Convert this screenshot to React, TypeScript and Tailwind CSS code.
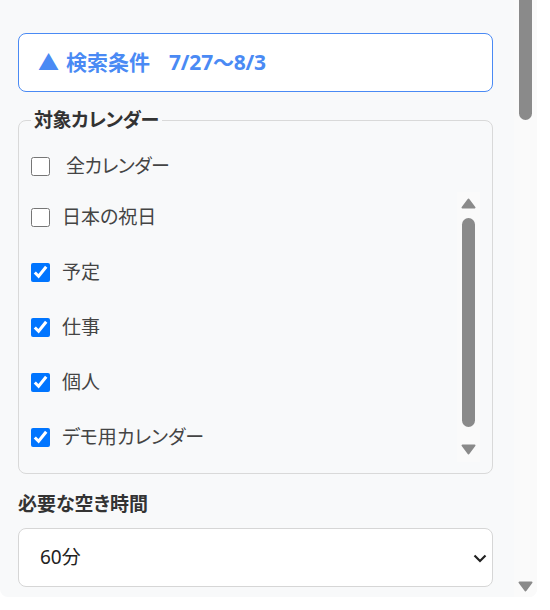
import React from 'react';

const calendars = [
  { name: '日本の祝日', checked: false },
  { name: '予定', checked: true },
  { name: '仕事', checked: true },
  { name: '個人', checked: true },
  { name: 'デモ用カレンダー', checked: true },
];

function Arrow({ up }: { up?: boolean }) {
  return (
    <svg width="15" height="11" viewBox="0 0 15 11" className="shrink-0">
      <polygon
        points={up ? '7.5,1.5 13.5,9.5 1.5,9.5' : '1.5,1.5 13.5,1.5 7.5,9.5'}
        fill="#8a8a8a"
        stroke="#8a8a8a"
        strokeWidth="2"
        strokeLinejoin="round"
      />
    </svg>
  );
}

export default function App() {
  return (
    <div className="h-[610px] w-[550px] overflow-hidden bg-white font-['Noto_Sans','Noto_Sans_CJK_JP',sans-serif] [font-feature-settings:'palt']">
      <div className="flex h-[597px] w-[537px] overflow-hidden rounded-b-lg bg-[#f8f9fa]">
        <div className="flex flex-1 flex-col pl-[18px] pr-[21px] pt-[33px]">
          <button className="flex h-[59px] w-full shrink-0 items-center rounded-lg border border-[#4a8af4] bg-white pl-[19px] text-[21px] font-bold leading-none text-[#4a8af4]">
            <span>▲</span>
            <span className="ml-[7px]">検索条件</span>
            <span className="ml-[19px] tracking-[-0.2px]">7/27〜8/3</span>
          </button>

          {/* Target calendars */}
          <fieldset className="mt-[19px] rounded-lg border border-[#d9d9d9] px-[12px] pb-[11px]">
            <legend className="px-[3px] text-[19px] font-bold leading-[18px] tracking-[-0.4px] text-[#333]">対象カレンダー</legend>
            <div className="pt-[17px]">
              <label className="flex h-[40px] items-center">
                <input type="checkbox" className="m-0 h-[19px] w-[19px] shrink-0" />
                <span className="ml-[16px] text-[19px] tracking-[-0.5px] text-[#444]">全カレンダー</span>
              </label>
            </div>
            <div className="mt-[6px] flex h-[270px]">
              <div className="flex-1 overflow-hidden">
                <div className="-mt-[2px]">
                  {calendars.map((c) => (
                    <label key={c.name} className="flex h-[55px] items-center">
                      <input type="checkbox" defaultChecked={c.checked} className="m-0 h-[19px] w-[19px] shrink-0" />
                      <span className="ml-[12px] text-[19px] text-[#444]">{c.name}</span>
                    </label>
                  ))}
                </div>
              </div>
              <div className="flex w-[23px] flex-col items-center bg-[#fafafa] pt-[6px]">
                <Arrow up />
                <div className="mt-[9px] h-[209px] w-[13px] rounded-full bg-[#8a8a8a]" />
                <div className="mt-[17px]">
                  <Arrow />
                </div>
              </div>
            </div>
          </fieldset>

          <div className="mt-[18px] text-[19px] font-bold leading-[24px] text-[#333]">必要な空き時間</div>
          <div className="relative mt-[12px]">
            <select
              defaultValue="60"
              className="h-[59px] w-full appearance-none rounded-lg border border-[#d6d6d6] bg-white pl-[21px] text-[19px] text-[#222] outline-none"
            >
              <option value="30">30分</option>
              <option value="60">60分</option>
              <option value="90">90分</option>
              <option value="120">120分</option>
            </select>
            <svg
              width="14"
              height="9"
              viewBox="0 0 14 9"
              className="pointer-events-none absolute right-[6px] top-[26px]"
            >
              <path d="M1.5 1.5 L7 7 L12.5 1.5" fill="none" stroke="#222" strokeWidth="2.2" />
            </svg>
          </div>
        </div>

        {/* page scrollbar */}
        <div className="flex w-[23px] flex-col items-center bg-[#fafafa] pb-[5px]">
          <div className="h-[120px] w-[13px] rounded-b-full bg-[#8a8a8a]" />
          <div className="flex-1" />
          <Arrow />
        </div>
      </div>
    </div>
  );
}
